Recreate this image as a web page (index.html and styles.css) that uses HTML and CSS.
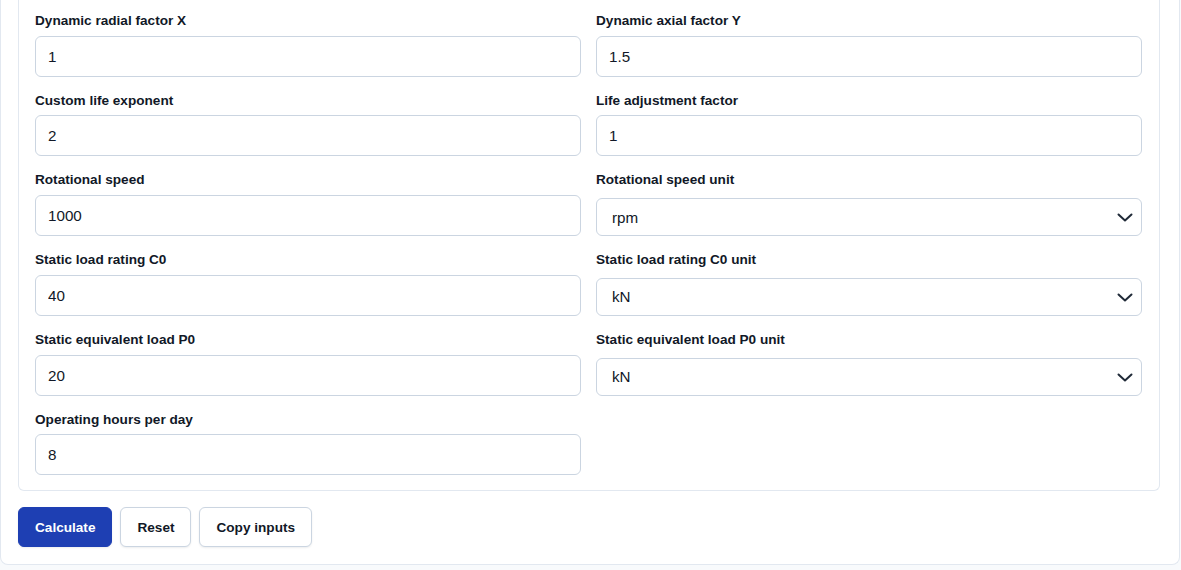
FILE: index.html
```html
<!DOCTYPE html>
<html lang="en">
<head>
    <meta charset="UTF-8">
    <meta name="viewport" content="width=device-width, initial-scale=1.0">
    <title>Bearing Life Calculator</title>
    <link rel="stylesheet" href="styles.css">
</head>
<body>
    <div class="panel">
        <div class="inputs-card">
            <div class="field">
                <label for="factorX">Dynamic radial factor X</label>
                <input type="text" id="factorX" value="1">
            </div>
            <div class="field">
                <label for="factorY">Dynamic axial factor Y</label>
                <input type="text" id="factorY" value="1.5">
            </div>
            <div class="field">
                <label for="lifeExp">Custom life exponent</label>
                <input type="text" id="lifeExp" value="2">
            </div>
            <div class="field">
                <label for="lifeAdj">Life adjustment factor</label>
                <input type="text" id="lifeAdj" value="1">
            </div>
            <div class="field">
                <label for="speed">Rotational speed</label>
                <input type="text" id="speed" value="1000">
            </div>
            <div class="field">
                <label for="speedUnit">Rotational speed unit</label>
                <div class="select-wrap">
                    <select id="speedUnit">
                        <option>rpm</option>
                        <option>rad/s</option>
                    </select>
                    <svg class="chevron" width="16" height="9" viewBox="0 0 16 9"><path d="M1.5 1.5 8 7.5 14.5 1.5" fill="none" stroke="#1f2937" stroke-width="2" stroke-linecap="round" stroke-linejoin="round"/></svg>
                </div>
            </div>
            <div class="field">
                <label for="c0">Static load rating C0</label>
                <input type="text" id="c0" value="40">
            </div>
            <div class="field">
                <label for="c0Unit">Static load rating C0 unit</label>
                <div class="select-wrap">
                    <select id="c0Unit">
                        <option>kN</option>
                        <option>N</option>
                    </select>
                    <svg class="chevron" width="16" height="9" viewBox="0 0 16 9"><path d="M1.5 1.5 8 7.5 14.5 1.5" fill="none" stroke="#1f2937" stroke-width="2" stroke-linecap="round" stroke-linejoin="round"/></svg>
                </div>
            </div>
            <div class="field">
                <label for="p0">Static equivalent load P0</label>
                <input type="text" id="p0" value="20">
            </div>
            <div class="field">
                <label for="p0Unit">Static equivalent load P0 unit</label>
                <div class="select-wrap">
                    <select id="p0Unit">
                        <option>kN</option>
                        <option>N</option>
                    </select>
                    <svg class="chevron" width="16" height="9" viewBox="0 0 16 9"><path d="M1.5 1.5 8 7.5 14.5 1.5" fill="none" stroke="#1f2937" stroke-width="2" stroke-linecap="round" stroke-linejoin="round"/></svg>
                </div>
            </div>
            <div class="field">
                <label for="hours">Operating hours per day</label>
                <input type="text" id="hours" value="8">
            </div>
        </div>
        <div class="actions">
            <button class="btn btn-primary">Calculate</button>
            <button class="btn">Reset</button>
            <button class="btn">Copy inputs</button>
        </div>
    </div>
</body>
</html>
```

FILE: styles.css
```css
body {
    margin: 0;
    font-family: "Liberation Sans", Arial, sans-serif;
    background-color: #f8fafc;
    color: #111827;
}

.panel {
    margin-right: 1px;
    padding: 0 19px 17px 17px;
    background-color: #fff;
    border: 1px solid #e2e8f0;
    border-top: none;
    border-radius: 0 0 8px 8px;
}

.inputs-card {
    display: grid;
    grid-template-columns: 1fr 1fr;
    column-gap: 15px;
    row-gap: 16px;
    padding: 13px 17px 15px 16px;
    border: 1px solid #e2e8f0;
    border-top: none;
    border-radius: 0 0 6px 6px;
}

.field {
    display: flex;
    flex-direction: column;
}

label {
    font-size: 0.85rem;
    font-weight: bold;
    line-height: 1.2;
    margin-bottom: 6.4px;
}

input[type="text"],
select {
    box-sizing: border-box;
    width: 100%;
    height: 41px;
    padding: 0 12px;
    font-family: inherit;
    font-size: 0.95rem;
    color: #111827;
    background-color: #fff;
    border: 1px solid #cbd5e1;
    border-radius: 6px;
    outline: none;
}

.select-wrap {
    position: relative;
    margin-top: 3px;
}

select {
    height: 38px;
    padding-left: 15px;
    appearance: none;
    -webkit-appearance: none;
}

.chevron {
    position: absolute;
    right: 9px;
    top: 15px;
    pointer-events: none;
}

.actions {
    display: flex;
    gap: 8px;
    margin-top: 16px;
}

.btn {
    height: 40px;
    padding: 0 16px;
    font-family: inherit;
    font-size: 0.85rem;
    font-weight: bold;
    color: #111827;
    background-color: #fff;
    border: 1px solid #cbd5e1;
    border-radius: 6px;
    box-shadow: 0 1px 2px rgba(15, 23, 42, 0.08);
    cursor: pointer;
}

.btn-primary {
    color: #fff;
    background-color: #1e3fb3;
    border-color: #1e3fb3;
}
```
